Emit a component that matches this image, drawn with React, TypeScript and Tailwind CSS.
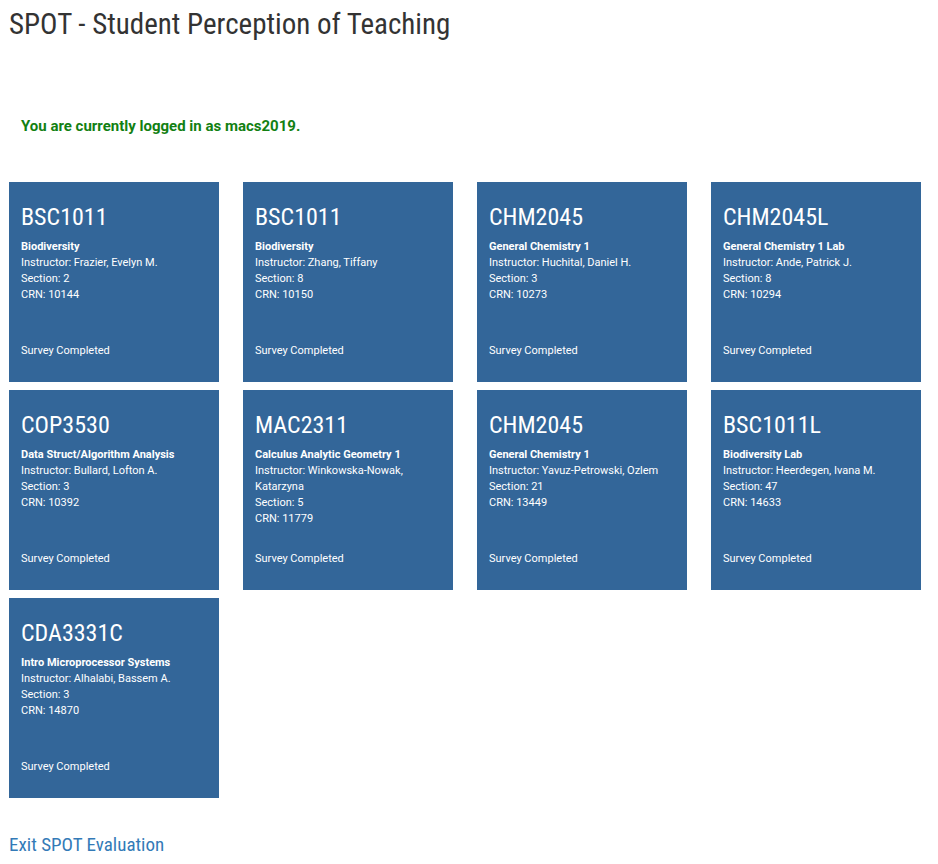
const courses = [
  { code: 'BSC1011', name: 'Biodiversity', instructor: 'Frazier, Evelyn M.', section: '2', crn: '10144' },
  { code: 'BSC1011', name: 'Biodiversity', instructor: 'Zhang, Tiffany', section: '8', crn: '10150' },
  { code: 'CHM2045', name: 'General Chemistry 1', instructor: 'Huchital, Daniel H.', section: '3', crn: '10273' },
  { code: 'CHM2045L', name: 'General Chemistry 1 Lab', instructor: 'Ande, Patrick J.', section: '8', crn: '10294' },
  { code: 'COP3530', name: 'Data Struct/Algorithm Analysis', instructor: 'Bullard, Lofton A.', section: '3', crn: '10392' },
  { code: 'MAC2311', name: 'Calculus Analytic Geometry 1', instructor: 'Winkowska-Nowak, Katarzyna', section: '5', crn: '11779' },
  { code: 'CHM2045', name: 'General Chemistry 1', instructor: 'Yavuz-Petrowski, Ozlem', section: '21', crn: '13449' },
  { code: 'BSC1011L', name: 'Biodiversity Lab', instructor: 'Heerdegen, Ivana M.', section: '47', crn: '14633' },
  { code: 'CDA3331C', name: 'Intro Microprocessor Systems', instructor: 'Alhalabi, Bassem A.', section: '3', crn: '14870' },
];

const condensed = "font-['Roboto_Condensed','Liberation_Sans_Narrow',Roboto,sans-serif]";

function CourseCard({ c }: { c: (typeof courses)[number] }) {
  return (
    <div className="flex h-[200px] flex-col bg-[#336699] px-3 pb-[23px] pt-[21px] text-white">
      <div className={`${condensed} text-[24px] leading-[28px]`}>{c.code}</div>
      <div className="mt-[8px] font-['Roboto',sans-serif] text-[11px] leading-[16px]">
        <div className="font-bold">{c.name}</div>
        <div>Instructor: {c.instructor}</div>
        <div>Section: {c.section}</div>
        <div>CRN: {c.crn}</div>
      </div>
      <div className="mt-auto font-['Roboto',sans-serif] text-[11px] leading-[16px]">Survey Completed</div>
    </div>
  );
}

export default function App() {
  return (
    <div className="min-h-screen bg-white px-[9px] pt-[6px] text-[#333]">
      <h1 className={`${condensed} text-[29px] leading-[36px] text-[#333]`}>SPOT - Student Perception of Teaching</h1>
      <p className="mt-[74px] pl-3 font-['Roboto',sans-serif] text-[15px] leading-[20px] font-bold text-[#128012]">
        You are currently logged in as macs2019.
      </p>
      <div className="mt-[46px] grid w-[912px] grid-cols-4 gap-x-6 gap-y-2">
        {courses.map((c, i) => (
          <CourseCard key={i} c={c} />
        ))}
      </div>
      <a href="#" className={`mt-[33px] inline-block ${condensed} text-[19px] text-[#337ab7]`}>
        Exit SPOT Evaluation
      </a>
    </div>
  );
}
